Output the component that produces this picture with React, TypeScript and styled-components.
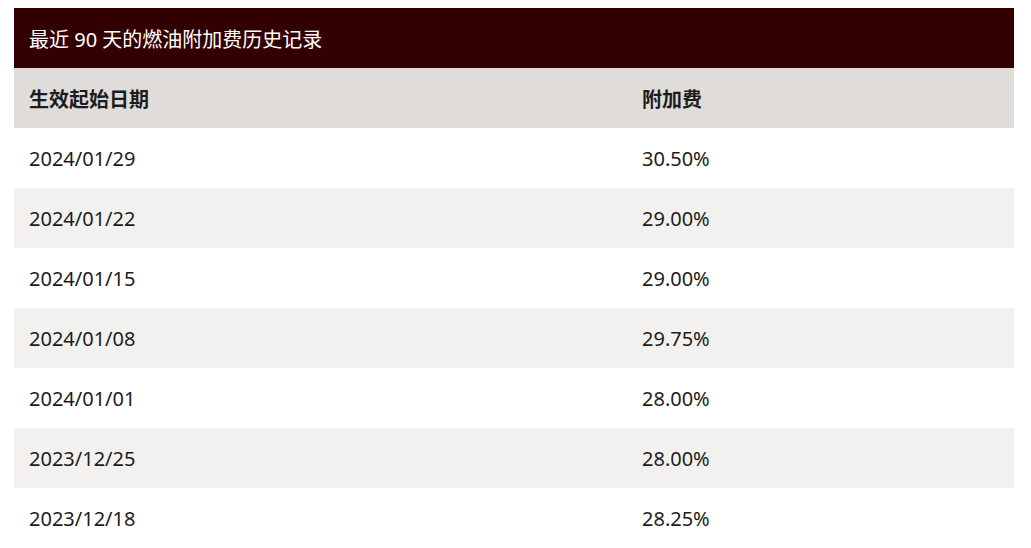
import styled, { createGlobalStyle } from "styled-components";

type Row = {
  date: string;
  rate: string;
};

const rows: Row[] = [
  { date: "2024/01/29", rate: "30.50%" },
  { date: "2024/01/22", rate: "29.00%" },
  { date: "2024/01/15", rate: "29.00%" },
  { date: "2024/01/08", rate: "29.75%" },
  { date: "2024/01/01", rate: "28.00%" },
  { date: "2023/12/25", rate: "28.00%" },
  { date: "2023/12/18", rate: "28.25%" },
];

const GlobalStyle = createGlobalStyle`
  html, body {
    margin: 0;
    padding: 0;
    background: #ffffff;
  }
  body {
    font-family: "Noto Sans", "Noto Sans CJK SC", sans-serif;
    color: #1c1c1c;
  }
`;

const Page = styled.div`
  padding: 8px 17px 0 14px;
`;

const Table = styled.section`
  width: 1000px;
  display: flex;
  flex-direction: column;
`;

const Caption = styled.h2`
  margin: 0;
  height: 60px;
  display: flex;
  align-items: center;
  padding: 0 15px;
  background: #330000;
  color: #ffffff;
  font-size: 20px;
  font-weight: 400;
  font-family: "Noto Sans", "Noto Sans CJK SC", sans-serif;
`;

const Line = styled.div<{ $bg: string }>`
  display: grid;
  grid-template-columns: 613px 1fr;
  height: 60px;
  align-items: center;
  background: ${(p) => p.$bg};
`;

const Cell = styled.div<{ $bold?: boolean }>`
  padding: 0 15px;
  font-size: 20px;
  font-weight: ${(p) => (p.$bold ? 700 : 400)};
  color: #1c1c1c;
`;

export default function App() {
  return (
    <>
      <GlobalStyle />
      <Page>
        <Table>
          <Caption>最近 90 天的燃油附加费历史记录</Caption>
          <Line $bg="#dfdcd9">
            <Cell $bold>生效起始日期</Cell>
            <Cell $bold>附加费</Cell>
          </Line>
          {rows.map((row, index) => (
            <Line key={row.date} $bg={index % 2 === 0 ? "#ffffff" : "#f2f1f0"}>
              <Cell>{row.date}</Cell>
              <Cell>{row.rate}</Cell>
            </Line>
          ))}
        </Table>
      </Page>
    </>
  );
}
